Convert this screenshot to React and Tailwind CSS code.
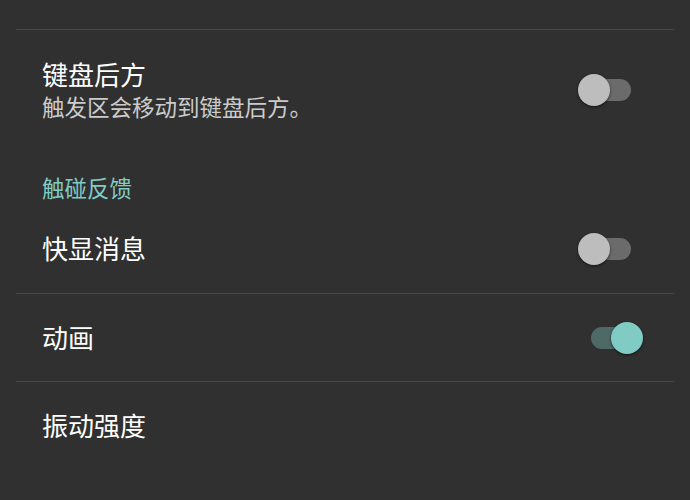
import React, { useState } from 'react';

const font = { fontFamily: '"Noto Sans CJK SC", "Noto Sans", sans-serif' };

function Toggle({ on, onChange }) {
    return (
        <button
            onClick={onChange}
            className="relative w-[40px] h-[22px] shrink-0 mr-[59px]"
        >
            <span
                className={`absolute inset-0 rounded-full ${on ? 'bg-[#4d6a67]' : 'bg-[#6b6b6b]'}`}
            ></span>
            <span
                className={`absolute top-[-5px] w-[32px] h-[32px] rounded-full shadow-[0_1px_3px_rgba(0,0,0,0.6)] ${on ? 'left-[20px] bg-[#80cbc4]' : 'left-[-13px] bg-[#bdbdbd]'}`}
            ></span>
        </button>
    );
}

function Divider() {
    return <div className="mx-[16px] h-px bg-[#474747]"></div>;
}

export default function App() {
    const [behindKeyboard, setBehindKeyboard] = useState(false);
    const [toast, setToast] = useState(false);
    const [animation, setAnimation] = useState(true);

    return (
        <div className="w-[690px] h-[500px] bg-[#303030] overflow-hidden" style={font}>
            <div className="h-[29px]"></div>
            <Divider />

            {/* 键盘后方 */}
            <div className="h-[120px] flex items-center justify-between pl-[42px]">
                <div className="flex flex-col pb-[3px]">
                    <span className="text-[26px] leading-[34px] text-white">键盘后方</span>
                    <span className="text-[22.5px] leading-[30px] text-[#cbcbcb]">触发区会移动到键盘后方。</span>
                </div>
                <Toggle on={behindKeyboard} onChange={() => setBehindKeyboard(!behindKeyboard)} />
            </div>

            {/* 分类标题 */}
            <div className="h-[55px] pl-[42px] pt-[22px]">
                <span className="text-[22.5px] leading-[30px] text-[#80cbc4]">触碰反馈</span>
            </div>

            <div className="h-[88px] flex items-center justify-between pl-[42px]">
                <span className="text-[26px] leading-[34px] text-white pb-[2px]">快显消息</span>
                <Toggle on={toast} onChange={() => setToast(!toast)} />
            </div>
            <Divider />

            <div className="h-[87px] flex items-center justify-between pl-[42px]">
                <span className="text-[26px] leading-[34px] text-white pb-[2px]">动画</span>
                <Toggle on={animation} onChange={() => setAnimation(!animation)} />
            </div>
            <Divider />

            <div className="h-[88px] flex items-center pl-[42px]">
                <span className="text-[26px] leading-[34px] text-white pb-[2px]">振动强度</span>
            </div>
        </div>
    );
}
